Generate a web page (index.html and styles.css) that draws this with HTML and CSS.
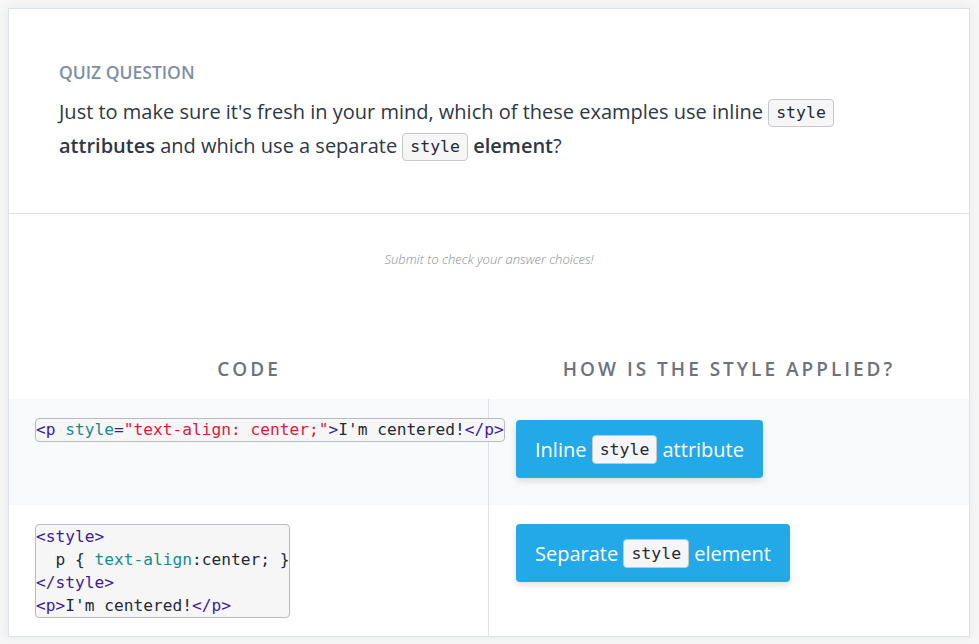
FILE: index.html
```html
<!DOCTYPE html>
<html>
<head>
<meta charset="utf-8">
<link rel="stylesheet" href="styles.css">
</head>
<body>
<div class="card">
  <div class="question">
    <div class="label">QUIZ QUESTION</div>
    <p class="prompt">Just to make sure it's fresh in your mind, which of these examples use inline <code class="ic">style</code> <strong>attributes</strong> and which use a separate <code class="ic">style</code> <strong>element</strong>?</p>
  </div>
  <div class="feedback">Submit to check your answer choices!</div>
  <div class="table">
    <div class="th">CODE</div>
    <div class="th">HOW IS THE STYLE APPLIED?</div>
    <div class="cell left shaded">
      <pre class="code"><span class="tag">&lt;p</span> <span class="attr">style</span><span class="tag">=</span><span class="str">"text-align: center;"</span><span class="tag">&gt;</span>I'm centered!<span class="tag">&lt;/p&gt;</span></pre>
    </div>
    <div class="cell right shaded first">
      <div class="btn">Inline <code class="ic">style</code> attribute</div>
    </div>
    <div class="cell left">
      <pre class="code"><span class="tag">&lt;style&gt;</span>
  p { <span class="attr">text-align</span>:center; }
<span class="tag">&lt;/style&gt;</span>
<span class="tag">&lt;p&gt;</span>I'm centered!<span class="tag">&lt;/p&gt;</span></pre>
    </div>
    <div class="cell right">
      <div class="btn">Separate <code class="ic">style</code> element</div>
    </div>
  </div>
</div>
</body>
</html>
```
FILE: styles.css
```css
* { box-sizing: border-box; }
html, body { margin: 0; padding: 0; }
body {
  background: #f6f6f7;
  padding: 8px 9px 7px 8px;
  font-family: "Open Sans", "Liberation Sans", sans-serif;
  color: #2d3748;
}
.card {
  background: #fff;
  border: 1px solid #dbe2ec;
  box-shadow: 0 0 10px rgba(0, 0, 0, 0.06);
  height: 629px;
  overflow: hidden;
}
.question {
  padding: 51px 50px 50px 50px;
  border-bottom: 1px solid #dbe0ea;
}
.label {
  font-size: 17.5px;
  line-height: 24px;
  font-weight: 600;
  color: #7f8ea8;
}
.prompt {
  margin: 11px 0 0 0;
  font-size: 20px;
  line-height: 34px;
  color: #2d3748;
}
.prompt strong { font-weight: 600; }
.ic {
  display: inline-block;
  font-family: "DejaVu Sans Mono", monospace;
  font-size: 16.5px;
  line-height: 26px;
  padding: 0 7px;
  background: #f6f6f7;
  border: 1px solid #c5c8cf;
  border-radius: 4px;
  color: #1f2937;
  vertical-align: 1px;
}
.feedback {
  padding-top: 37px;
  text-align: center;
  font-size: 13px;
  line-height: 16px;
  font-style: italic;
  font-weight: 300;
  color: #8a8d93;
  height: 143px;
}
.table {
  display: grid;
  grid-template-columns: 480px 1fr;
}
.th {
  text-align: center;
  font-size: 19px;
  line-height: 24px;
  font-weight: 600;
  letter-spacing: 3px;
  color: #6c727e;
  margin-bottom: 18px;
}
.cell { padding: 19px 26px 20px 26px; }
.shaded { background: #f8f9fb; }
.left {
  border-right: 1px solid #dde2ea;
  position: relative;
  z-index: 1;
}
.right { padding-left: 27px; }
.right.first { padding-top: 21px; padding-bottom: 27px; }
.code {
  display: inline-block;
  margin: 0;
  font-family: "DejaVu Sans Mono", monospace;
  font-size: 16.2px;
  line-height: 23px;
  color: #1f2937;
  background: #f6f6f7;
  border: 1px solid #b9bac2;
  border-radius: 4px;
  padding: 0;
}
.shaded .code { line-height: 22px; }
.tag { color: #3a1d9a; }
.attr { color: #178d8a; }
.str { color: #e1173a; }
.btn {
  display: inline-flex;
  align-items: center;
  height: 58px;
  padding: 0 19px;
  background: #23a8e8;
  color: #fff;
  font-size: 20px;
  border-radius: 4px;
  box-shadow: 0 3px 6px rgba(0, 0, 0, 0.12);
  white-space: pre;
}
.btn .ic {
  line-height: 27px;
  vertical-align: 0;
  margin: 0;
}
```
